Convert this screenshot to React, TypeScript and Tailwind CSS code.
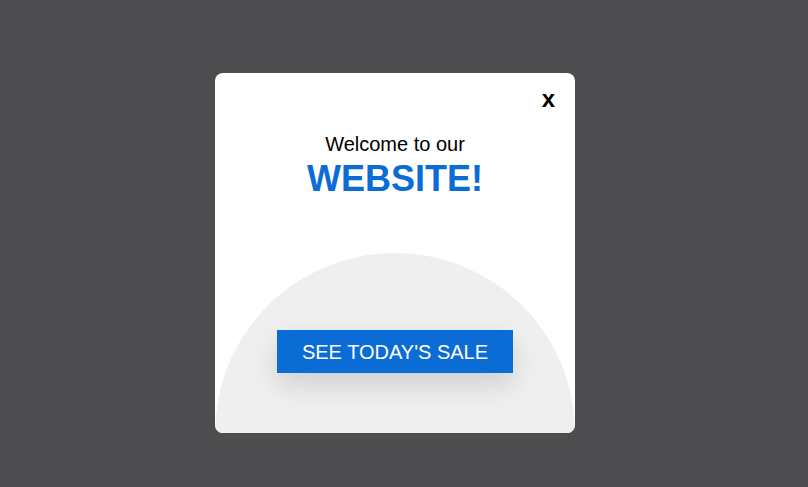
const App = () => {
	return (
		<div className="min-h-[487px] bg-[#4d4d4f] pt-[73px] pl-[215px] font-['Liberation_Sans',Arial,sans-serif]">
			{/* Popup */}
			<div className="w-[360px] h-[360px] bg-white rounded-lg overflow-hidden flex flex-col">
				<div className="flex justify-end pt-[14px] pr-[20px]">
					<button className="text-[24px] leading-6 font-bold text-black">x</button>
				</div>

				<div className="mt-[22px] text-center">
					<p className="text-[20px] leading-[23px] text-black">Welcome to our</p>
					<p className="mt-[2px] text-[36px] leading-[41px] font-bold text-[#0b6cd6]">WEBSITE!</p>
				</div>

				{/* Half circle */}
				<div className="mt-auto h-[180px] rounded-t-full bg-[#efefef] flex justify-center pt-[77px]">
					<button
						type="button"
						className="w-[236px] h-[43px] bg-[#0b6cd6] text-white text-[20px] uppercase shadow-[0_12px_26px_rgba(0,0,0,0.13)]"
					>
						See today's sale
					</button>
				</div>
			</div>
		</div>
	);
};

export default App;
